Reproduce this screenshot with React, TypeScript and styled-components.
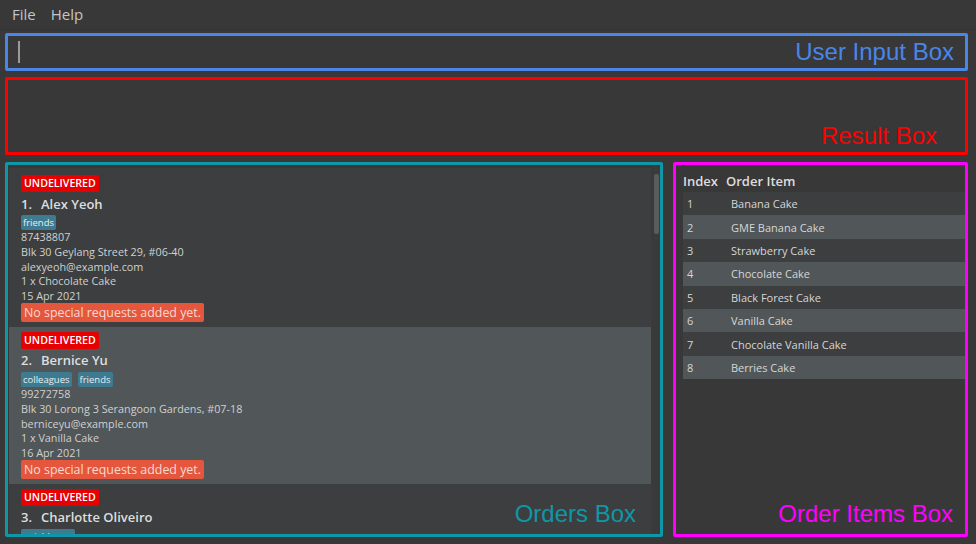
import React from "react";
import styled, { createGlobalStyle } from "styled-components";

const GlobalStyle = createGlobalStyle`
  html, body { margin: 0; padding: 0; background: #383838; }
  body { font-family: "Open Sans", "Noto Sans", sans-serif; }
  * { box-sizing: border-box; }
`;

const Window = styled.div`
  width: 976px;
  height: 544px;
  background: #383838;
  display: flex;
  flex-direction: column;
  overflow: hidden;
`;

const MenuBar = styled.div`
  flex: none;
  height: 30px;
  display: flex;
  align-items: center;
  gap: 15px;
  padding-left: 12px;
  border-bottom: 1px solid #333333;
  font-size: 15px;
  color: #c4c4c4;
`;

const MenuItem = styled.span`
  line-height: 1;
`;

const Content = styled.div`
  flex: 1;
  min-height: 0;
  display: flex;
  flex-direction: column;
  padding: 3px 8px 7px 5px;
  gap: 6px;
`;

const Panel = styled.div<{ $color: string; $height?: number }>`
  position: relative;
  border: 3px solid ${(p) => p.$color};
  border-radius: 2px;
  ${(p) => (p.$height ? `height: ${p.$height}px;` : "")}
  flex: ${(p) => (p.$height ? "none" : "1")};
  min-height: 0;
`;

const Label = styled.span<{ $color: string; $right: number; $bottom: number }>`
  position: absolute;
  right: ${(p) => p.$right}px;
  bottom: ${(p) => p.$bottom}px;
  font-family: "Liberation Sans", Arial, sans-serif;
  font-size: 24px;
  line-height: 24px;
  color: ${(p) => p.$color};
  white-space: nowrap;
  pointer-events: none;
`;

const Caret = styled.div`
  position: absolute;
  left: 10px;
  top: 5px;
  width: 2px;
  height: 22px;
  background: #9a9a9a;
`;

const BottomRow = styled.div`
  flex: 1;
  display: flex;
  gap: 10px;
  margin-top: 1px;
  min-height: 0;
`;

const OrdersPanel = styled(Panel)`
  flex: none;
  width: 658px;
  display: flex;
`;

const ItemsPanel = styled(Panel)`
  flex: 1;
  padding: 5px 0 0 7px;
`;

const OrderList = styled.div`
  flex: 1;
  min-height: 0;
  padding: 3px 0 0 1px;
  display: flex;
  flex-direction: column;
  overflow: hidden;
`;

const ScrollTrack = styled.div`
  flex: none;
  width: 9px;
  padding: 9px 1px 0 3px;
  background: #3a3a3a;
`;

const ScrollThumb = styled.div`
  height: 60px;
  border-radius: 2px;
  background: #5c5c5c;
`;

const Cell = styled.div<{ $alt: boolean }>`
  flex: none;
  background: ${(p) => (p.$alt ? "#515658" : "#3c3e3f")};
  padding: 5px 12px 5px 12px;
  display: flex;
  flex-direction: column;
  align-items: flex-start;
  &:first-child { padding-top: 7px; }
`;

const Status = styled.span`
  height: 17px;
  padding: 0 3px;
  background: #e60000;
  color: #ffffff;
  font-size: 10.6px;
  font-weight: 600;
  line-height: 17px;
  border-radius: 2px;
`;

const NameLine = styled.div`
  height: 23px;
  display: flex;
  align-items: center;
  gap: 9px;
  font-size: 13px;
  font-weight: 600;
  color: #dedede;
`;

const Tags = styled.div`
  height: 15px;
  display: flex;
  gap: 6px;
`;

const Tag = styled.span`
  height: 15px;
  padding: 0 2px;
  background: #3e7b91;
  color: #e8eef0;
  font-size: 9.5px;
  line-height: 15px;
  border-radius: 2px;
`;

const Detail = styled.div`
  height: 14.8px;
  line-height: 14.8px;
  font-size: 10.8px;
  color: #d0d0d0;
  white-space: nowrap;
  &:first-of-type { margin-top: 1px; }
`;

const Request = styled.span`
  margin-top: -1px;
  height: 19px;
  padding: 0 3px;
  background: #e5573d;
  color: #f6d9d2;
  font-size: 12.4px;
  line-height: 19px;
  border-radius: 2px;
  white-space: nowrap;
`;

const Table = styled.div`
  display: flex;
  flex-direction: column;
`;

const HeaderRow = styled.div`
  height: 22px;
  display: grid;
  grid-template-columns: 43px 1fr;
  align-items: center;
  font-size: 13px;
  font-weight: 600;
  color: #dedede;
`;

const Row = styled.div<{ $alt: boolean }>`
  height: 23.4px;
  display: grid;
  grid-template-columns: 43px 1fr;
  align-items: center;
  background: ${(p) => (p.$alt ? "#515658" : "#3c3e3f")};
  font-size: 11px;
  color: #d6d6d6;
`;

const IndexCell = styled.span`
  padding-left: 4px;
`;

const ItemCell = styled.span`
  padding-left: 5px;
`;

type Order = {
  name: string;
  tags: string[];
  phone: string;
  address: string;
  email: string;
  item: string;
  date: string;
};

const orders: Order[] = [
  {
    name: "Alex Yeoh",
    tags: ["friends"],
    phone: "87438807",
    address: "Blk 30 Geylang Street 29, #06-40",
    email: "alexyeoh@example.com",
    item: "1 x Chocolate Cake",
    date: "15 Apr 2021",
  },
  {
    name: "Bernice Yu",
    tags: ["colleagues", "friends"],
    phone: "99272758",
    address: "Blk 30 Lorong 3 Serangoon Gardens, #07-18",
    email: "berniceyu@example.com",
    item: "1 x Vanilla Cake",
    date: "16 Apr 2021",
  },
  {
    name: "Charlotte Oliveiro",
    tags: ["neighbours"],
    phone: "93210283",
    address: "Blk 11 Ang Mo Kio Street 74, #11-04",
    email: "charlotte@example.com",
    item: "1 x Strawberry Cake",
    date: "17 Apr 2021",
  },
];

const items = [
  "Banana Cake",
  "GME Banana Cake",
  "Strawberry Cake",
  "Chocolate Cake",
  "Black Forest Cake",
  "Vanilla Cake",
  "Chocolate Vanilla Cake",
  "Berries Cake",
];

export default function App() {
  return (
    <>
      <GlobalStyle />
      <Window>
        <MenuBar>
          <MenuItem>File</MenuItem>
          <MenuItem>Help</MenuItem>
        </MenuBar>
        <Content>
          <Panel $color="#4a86e8" $height={38}>
            <Caret />
            <Label $color="#4a86e8" $right={11} $bottom={4}>
              User Input Box
            </Label>
          </Panel>
          <Panel $color="#ff0000" $height={78}>
            <Label $color="#ff0000" $right={28} $bottom={4}>
              Result Box
            </Label>
          </Panel>
          <BottomRow>
            <OrdersPanel $color="#0e97a6">
              <OrderList>
                {orders.map((o, i) => (
                  <Cell key={o.name} $alt={i % 2 === 1}>
                    <Status>UNDELIVERED</Status>
                    <NameLine>
                      <span>{i + 1}.</span>
                      <span>{o.name}</span>
                    </NameLine>
                    <Tags>
                      {o.tags.map((t) => (
                        <Tag key={t}>{t}</Tag>
                      ))}
                    </Tags>
                    <Detail>{o.phone}</Detail>
                    <Detail>{o.address}</Detail>
                    <Detail>{o.email}</Detail>
                    <Detail>{o.item}</Detail>
                    <Detail>{o.date}</Detail>
                    <Request>No special requests added yet.</Request>
                  </Cell>
                ))}
              </OrderList>
              <ScrollTrack>
                <ScrollThumb />
              </ScrollTrack>
              <Label $color="#0e97a6" $right={24} $bottom={8}>
                Orders Box
              </Label>
            </OrdersPanel>
            <ItemsPanel $color="#ff00ff">
              <Table>
                <HeaderRow>
                  <span>Index</span>
                  <span>Order Item</span>
                </HeaderRow>
                {items.map((it, i) => (
                  <Row key={it} $alt={i % 2 === 1}>
                    <IndexCell>{i + 1}</IndexCell>
                    <ItemCell>{it}</ItemCell>
                  </Row>
                ))}
              </Table>
              <Label $color="#ff00ff" $right={12} $bottom={8}>
                Order Items Box
              </Label>
            </ItemsPanel>
          </BottomRow>
        </Content>
      </Window>
    </>
  );
}
